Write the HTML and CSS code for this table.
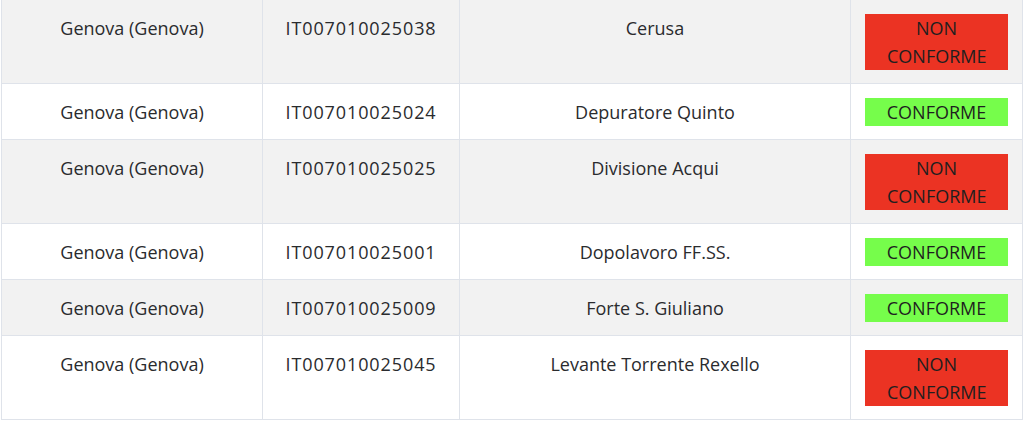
FILE: index.html
```html
<!DOCTYPE html>
<html lang="it">
<head>
<meta charset="utf-8">
<title>Acque di balneazione</title>
<link rel="stylesheet" href="styles.css">
</head>
<body>
<table class="grid">
  <colgroup>
    <col class="c-comune">
    <col class="c-codice">
    <col class="c-nome">
    <col class="c-stato">
  </colgroup>
  <tbody>
    <tr class="odd">
      <td>Genova (Genova)</td>
      <td class="code">IT007010025038</td>
      <td>Cerusa</td>
      <td class="stato"><span class="badge ko">NON CONFORME</span></td>
    </tr>
    <tr>
      <td>Genova (Genova)</td>
      <td class="code">IT007010025024</td>
      <td>Depuratore Quinto</td>
      <td class="stato"><span class="badge ok">CONFORME</span></td>
    </tr>
    <tr class="odd">
      <td>Genova (Genova)</td>
      <td class="code">IT007010025025</td>
      <td>Divisione Acqui</td>
      <td class="stato"><span class="badge ko">NON CONFORME</span></td>
    </tr>
    <tr>
      <td>Genova (Genova)</td>
      <td class="code">IT007010025001</td>
      <td>Dopolavoro FF.SS.</td>
      <td class="stato"><span class="badge ok">CONFORME</span></td>
    </tr>
    <tr class="odd">
      <td>Genova (Genova)</td>
      <td class="code">IT007010025009</td>
      <td>Forte S. Giuliano</td>
      <td class="stato"><span class="badge ok">CONFORME</span></td>
    </tr>
    <tr>
      <td>Genova (Genova)</td>
      <td class="code">IT007010025045</td>
      <td>Levante Torrente Rexello</td>
      <td class="stato"><span class="badge ko">NON CONFORME</span></td>
    </tr>
  </tbody>
</table>
</body>
</html>
```
FILE: styles.css
```css
html, body {
  margin: 0;
  padding: 0;
  background: #ffffff;
}

body {
  padding: 0 1px;
  font-family: "Open Sans", "Noto Sans", sans-serif;
  font-size: 18px;
  color: #2a2b2e;
}

.grid {
  width: 1022px;
  border-collapse: collapse;
  table-layout: fixed;
}

.c-comune { width: 261px; }
.c-codice { width: 197px; }
.c-nome { width: 391px; }
.c-stato { width: 172px; }

.grid td {
  border: 1px solid #dfe3ea;
  padding: 14px 14px 13px;
  text-align: center;
  vertical-align: top;
  line-height: 28px;
}

.grid td.code {
  letter-spacing: 0.9px;
}

.grid tr:first-child td {
  border-top: 0;
}

.grid tr.odd td {
  background: #f2f2f2;
}

.badge {
  display: block;
  text-align: center;
  color: #1f1f1f;
  line-height: 28px;
}

.badge.ko {
  background: #eb3323;
  padding: 0 22px;
}

.badge.ok {
  background: #76fd4b;
}
```
